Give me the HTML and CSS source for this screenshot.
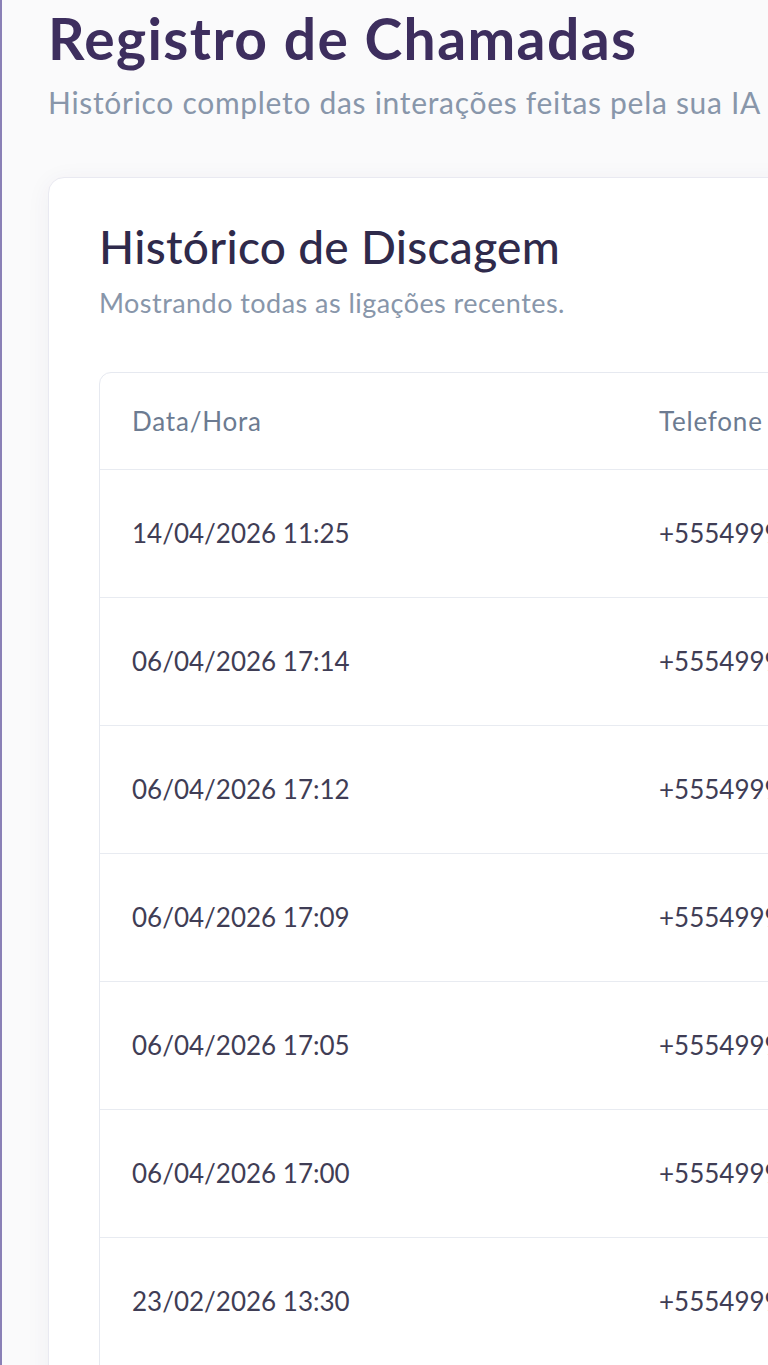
FILE: index.html
```html
<!DOCTYPE html>
<html lang="pt-BR">
<head>
    <meta charset="UTF-8">
    <title>Registro de Chamadas</title>
    <link rel="stylesheet" href="styles.css">
</head>
<body>
    <main class="page">
        <header class="page-head">
            <h1>Registro de Chamadas</h1>
            <p class="page-sub">Histórico completo das interações feitas pela sua IA de voz.</p>
        </header>
        <section class="card">
            <h2>Histórico de Discagem</h2>
            <p class="card-sub">Mostrando todas as ligações recentes.</p>
            <div class="table-box">
                <table class="calls">
                    <colgroup>
                        <col class="col-date">
                        <col class="col-phone">
                        <col class="col-dur">
                        <col class="col-status">
                    </colgroup>
                    <thead>
                        <tr><th>Data/Hora</th><th>Telefone</th><th>Duração</th><th>Status</th></tr>
                    </thead>
                    <tbody>
                        <tr><td>14/04/2026 11:25</td><td>+5554999214387</td><td>01:42</td><td>Concluída</td></tr>
                        <tr><td>06/04/2026 17:14</td><td>+5554999871203</td><td>00:58</td><td>Concluída</td></tr>
                        <tr><td>06/04/2026 17:12</td><td>+5554999871203</td><td>00:12</td><td>Sem resposta</td></tr>
                        <tr><td>06/04/2026 17:09</td><td>+5554999305516</td><td>02:31</td><td>Concluída</td></tr>
                        <tr><td>06/04/2026 17:05</td><td>+5554999305516</td><td>00:07</td><td>Sem resposta</td></tr>
                        <tr><td>06/04/2026 17:00</td><td>+5554999640872</td><td>03:04</td><td>Concluída</td></tr>
                        <tr><td>23/02/2026 13:30</td><td>+5554999128845</td><td>01:15</td><td>Concluída</td></tr>
                        <tr><td>23/02/2026 13:21</td><td>+5554999128845</td><td>00:22</td><td>Ocupado</td></tr>
                    </tbody>
                </table>
            </div>
        </section>
    </main>
</body>
</html>
```

FILE: styles.css
```css
*{box-sizing: border-box;}
html,body{margin: 0;padding: 0;}
body{background: #fafafb;font-family: Lato, "Noto Sans", sans-serif;overflow: hidden;}
.page{min-height: 100vh;border-left: 2px solid #8a80b6;padding: 6px 0 0 46px;}
.page-head h1{margin: 0;font-size: 57px;line-height: 1.15;font-weight: 700;color: #3d2e5e;letter-spacing: 1.4px;white-space: nowrap;}
.page-sub{margin: 11px 0 0;font-size: 30px;line-height: 1.3;color: #8896aa;letter-spacing: 0.7px;white-space: nowrap;}
.card{margin-top: 55px;width: 1300px;padding: 41px 50px 40px;background: #fff;border: 1px solid #e9e9f1;border-radius: 16px;box-shadow: 0 4px 24px rgba(60, 50, 100, .06);}
.card h2{margin: 0;font-size: 46px;line-height: 1.2;font-weight: 500;color: #2f2a4b;letter-spacing: 0.3px;white-space: nowrap;}
.card-sub{margin: 13px 0 0;font-size: 27px;line-height: 1.2;color: #8896aa;letter-spacing: 0.45px;white-space: nowrap;}
.table-box{margin-top: 53px;border: 1px solid #e6e9f0;border-radius: 12px;overflow: hidden;}
.calls{width: 100%;border-collapse: collapse;table-layout: fixed;}
.col-date{width: 527px;}
.col-phone{width: 360px;}
.calls th,.calls td{padding: 0 32px;text-align: left;font-size: 26px;white-space: nowrap;}
.calls th{height: 96px;font-weight: 400;color: #6c7b91;letter-spacing: 0.8px;}
.calls td{height: 128px;border-top: 1px solid #e8ebf1;color: #3f3d55;font-weight: 400;}
```
